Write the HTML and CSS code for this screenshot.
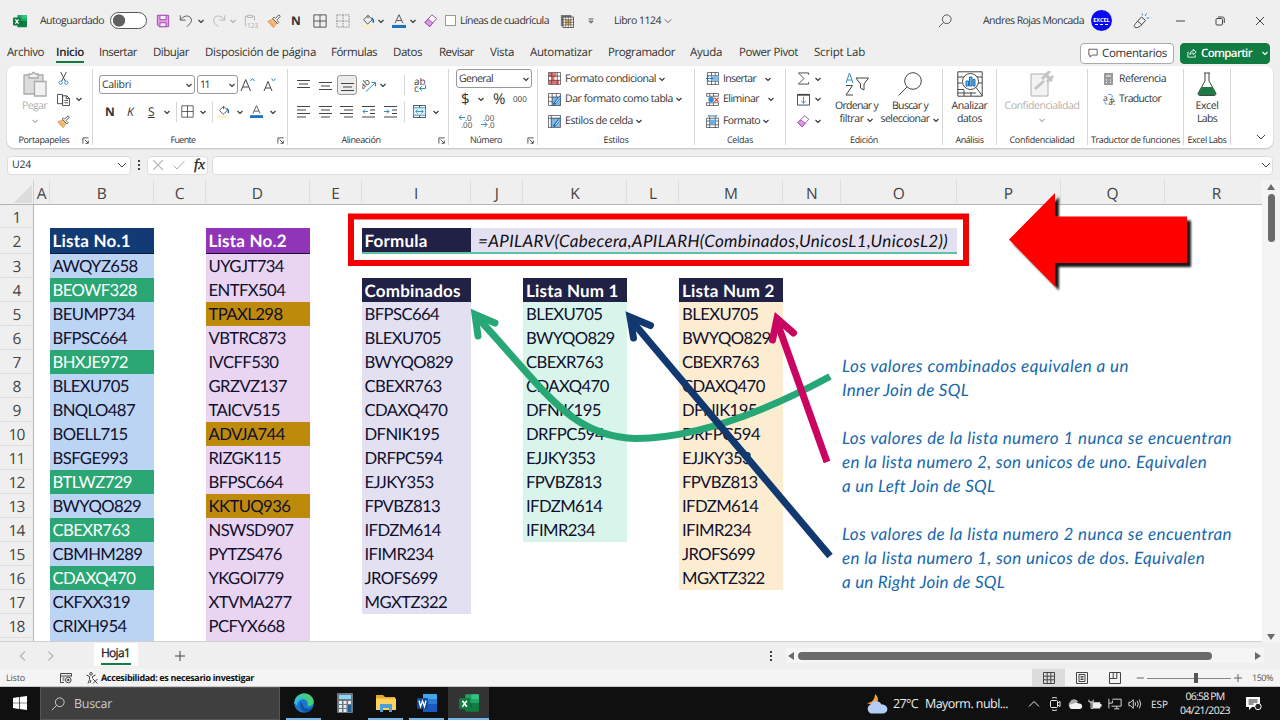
FILE: index.html
```html
<!DOCTYPE html>
<html lang="es">
<head>
    <meta charset="UTF-8">
    <meta name="viewport" content="width=device-width, initial-scale=1.0">
    <title>Libro 1124 - Excel</title>
    <link rel="stylesheet" href="styles.css">
</head>
<body>

    <!-- Icon sprite -->
    <svg class="sprite">
        <symbol id="chev" viewBox="0 0 8 8"><path d="M1.500 3 L4 5.500 L6.500 3"/></symbol>
        <symbol id="chev-lg" viewBox="0 0 10 10"><path d="M1 3 L5 7 L9 3"/></symbol>
        <symbol id="caret-up" viewBox="0 0 12 12"><path d="M1 8.500 L6 3.500 L11 8.500"/></symbol>
        <symbol id="excel" viewBox="0 0 16 16"><path class="nos" fill="#21a366" d="M5 1h10a1 1 0 0 1 1 1v6H5z"/><path class="nos" fill="#107c41" d="M5 8h11v6a1 1 0 0 1-1 1H5z"/><path class="nos" fill="#33c481" d="M10 1h5a1 1 0 0 1 1 1v3h-6z"/><path class="nos" fill="#185c37" d="M5 8h5v4H5z"/><rect class="nos" fill="#107c41" y="4" width="9" height="9" rx="1"/><path stroke="#fff" stroke-width="1.3" d="M2.7 6.2l3.6 4.8M6.3 6.2L2.7 11"/></symbol>
        <symbol id="save" viewBox="0 0 16 16"><path fill="#e29be8" stroke="#9c3fae" d="M1.5 1.5h13v13h-11l-2-2z"/><path fill="#f6eef8" stroke="#9c3fae" d="M4.5 1.5h7v5h-7zM4.500 14.500v-4.500h7v4.500z"/></symbol>
        <symbol id="undo" viewBox="0 0 16 16"><path d="M1.500 1.500v5.500h6M2 6.500C5 2.500 9 1 12.500 3.500c3 3 1.500 6-.5 8L9 14.500"/></symbol>
        <symbol id="redo" viewBox="0 0 16 16"><path d="M14.500 1.500v5.500h-6M14 6.500C11 2.500 7 1 3.500 3.500c-3 3-1.500 6 .5 8L7 14.500"/></symbol>
        <symbol id="paste123" viewBox="0 0 16 16"><path d="M2.500 13.500H1.500v-11H4M9.500 2.500h2.500v5M4 1.500h5.500v2.500H4z"/><text class="faint" x="3.500" y="15.500" font-size="7.500">123</text></symbol>
        <symbol id="brush" viewBox="0 0 16 16"><path fill="#f9c48b" stroke="#d9822b" d="M1 8.500l6-2.500 4 4.500-3.500 5z"/><path stroke="#d9822b" d="M4 11l2-2M5.500 13l2.500-2.500"/><path fill="#fff" d="M6.500 5l5.500 6 1.500-1.500-2.300-2.500 4-4.500-1.500-1.500-4.300 4-1.500-1.500z"/></symbol>
        <symbol id="borders" viewBox="0 0 16 16"><path d="M1 1h14v14H1zM8 1v14M1 8h14"/></symbol>
        <symbol id="dashes" viewBox="0 0 16 16"><path stroke-dasharray="2 1" d="M1 1h14v14H1zM8 1v14M1 8h14"/></symbol>
        <symbol id="fill" viewBox="0 0 16 16"><path d="M3 6.500l5-5 5 5-5.500 5zM8 1.500V5"/><path stroke="#1b6fb5" stroke-width="1.800" d="M12 4.500c2 1 2.500 2.500 2 5.500"/><path class="nos" fill="#fbeecb" d="M0 13h14v3H0z"/></symbol>
        <symbol id="fontcolor" viewBox="0 0 16 16"><path d="M3.500 10.500L8 .8l4.500 9.700M5 7.500h6"/><path class="nos" fill="#1b72bd" d="M0 12.500h16v3.500H0z"/></symbol>
        <symbol id="eraser" viewBox="0 0 16 16"><path fill="#fff" stroke="#9c3fae" d="M1 9.500l8-8.500 5.500 4-8 9.500z"/><path fill="#d99be2" stroke="#9c3fae" d="M1 9.500l3.500-3.500 5.500 4-3.500 4.500z"/></symbol>
        <symbol id="tablepic" viewBox="0 0 16 16"><path class="nos" fill="#777" d="M1 1h12v3H4v10H1z"/><path fill="#fff" d="M3.500 3.500h12v12h-12z"/><path class="nos" fill="#f3b050" d="M6.500 6.500h6v6h-6z"/><path stroke-width=".7" d="M6.500 3.500v12M9.500 3.500v12M12.500 3.500v12M3.500 6.500h12M3.500 9.500h12M3.500 12.500h12"/></symbol>
        <symbol id="qat" viewBox="0 0 8 8"><path stroke-width=".8" d="M1.500 2h5M2 4.200l2 2L6 4.200z"/></symbol>
        <symbol id="search" viewBox="0 0 16 16"><circle cx="10" cy="6" r="5"/><path d="M6.500 9.500L1 15"/></symbol>
        <symbol id="pen" viewBox="0 0 16 16"><path d="M2 14.500c-1.500-1-.5-2.500.5-4L8.500 4l4 3.500L7 13.500c-2 1-3.500 1.500-5 1zM5 8.500l4 3.500"/><path stroke="#2f8fc5" d="M9.500 2.500L9 .5M12 3l1.500-2.500M13.500 5h2.500"/></symbol>
        <symbol id="min" viewBox="0 0 10 10"><path d="M1 5h9"/></symbol>
        <symbol id="restore" viewBox="0 0 10 10"><path d="M1 3.500q0-1 1-1h4.500q1 0 1 1V8q0 1-1 1H2q-1 0-1-1zM3 1h4.500q1.800 0 1.800 1.800V7"/></symbol>
        <symbol id="close" viewBox="0 0 10 10"><path d="M1 1l8 8M9 1L1 9"/></symbol>
        <symbol id="comment" viewBox="0 0 12 12"><path d="M1 1.500h10v7H5l-2.500 2.500V8.500H1z"/></symbol>
        <symbol id="share" viewBox="0 0 12 12"><path d="M2 5H1v6h9V8.500M3.500 8c0-3 1.500-4.500 4-4.500V1.500l3.500 3.500-3.500 3V6C5.500 6 4.500 6.500 3.500 8z"/></symbol>
        <symbol id="paste" viewBox="0 0 24 26"><path fill="#dcdcdc" stroke="#aaa" stroke-width="1.300" d="M1 4h19v19H1z"/><path fill="#f1f1f1" stroke="#aaa" stroke-width="1.300" d="M6 3h3q1.500-3.500 3 0h3v4H6zM11.500 10.500H23V25H11.500z"/></symbol>
        <symbol id="cut" viewBox="0 0 14 14"><path d="M4 0l5 10M10 0L5 10"/><circle cx="4" cy="11.500" r="1.800" stroke="#2f8fc5"/><circle cx="10" cy="11.500" r="1.800" stroke="#2f8fc5"/></symbol>
        <symbol id="copy" viewBox="0 0 14 14"><path fill="#fff" d="M6 11.500H.5V1.500H6v10M6 3h4.500l3 3v7.500H6zM10 3v3h3.500M8 8h4M8 10.500h4"/></symbol>
        <symbol id="launch" viewBox="0 0 8 8"><path d="M1 7.500V1h6.500M3 3l4 4M7.200 4v3.200H4"/></symbol>
        <symbol id="grow" viewBox="0 0 16 16"><path d="M1 14L5.700 2.500 10.500 14M2.700 10h6"/><path stroke="#2f8fc5" d="M10.500 4l2-2.500 2 2.500"/></symbol>
        <symbol id="shrink" viewBox="0 0 16 16"><path d="M1 14L5 4.500 9 14M2.300 11h5.500"/><path stroke="#2f8fc5" d="M8.500 1.500l2 2.500 2-2.500"/></symbol>
        <symbol id="al-top" viewBox="0 0 14 14"><path d="M0 2.500h13M2 6h9M0 9.500h13"/></symbol>
        <symbol id="al-mid" viewBox="0 0 14 14"><path d="M0 4.500h13M2 8h9M0 11.500h13"/></symbol>
        <symbol id="al-bot" viewBox="0 0 14 14"><path d="M0 5.500h13M2 9h9M0 12.500h13"/></symbol>
        <symbol id="al-left" viewBox="0 0 14 14"><path d="M0 1.500h13M0 5h9M0 8.500h13M0 12h9"/></symbol>
        <symbol id="al-center" viewBox="0 0 14 14"><path d="M0 1.500h13M2 5h9M0 8.500h13M2 12h9"/></symbol>
        <symbol id="al-right" viewBox="0 0 14 14"><path d="M0 1.500h13M4 5h9M0 8.500h13M4 12h9"/></symbol>
        <symbol id="outdent" viewBox="0 0 14 14"><path d="M0 1.500h13M8 5h5M8 8.500h5M0 12h13"/><path stroke="#2f8fc5" d="M6 6.500H1M3 4.500l-2 2 2 2"/></symbol>
        <symbol id="indent" viewBox="0 0 14 14"><path d="M0 1.500h13M8 5h5M8 8.500h5M0 12h13"/><path stroke="#2f8fc5" d="M0 6.500h5M3 4.500l2 2-2 2"/></symbol>
        <symbol id="orient" viewBox="0 0 14 14"><text x="-2" y="8" font-size="9" transform="rotate(-40 4 6)">ab</text><path stroke="#2f8fc5" d="M4 13.500L13 5M9.500 4.500H13.500V8.500"/></symbol>
        <symbol id="wrap" viewBox="0 0 14 14"><text x="1" y="7" font-size="10">ab</text><text x="1" y="14" font-size="10">c</text><path stroke="#2f8fc5" d="M12.500 7v3.500H6.500M9 8l-2.500 2.500L9 13"/></symbol>
        <symbol id="merge" viewBox="0 0 14 14"><path d="M.5.5h13v13H.5zM7 .5V3M7 11v2.500"/><path fill="#e3f1fb" stroke="#2f8fc5" d="M.5 3h13v8H.5zM3 7h8M5 5L3 7l2 2M9 5l2 2-2 2"/></symbol>
        <symbol id="dec-more" viewBox="0 0 14 14"><text x="6" y="6.500" font-size="8">.0</text><text x="2" y="14" font-size="8">.00</text><path stroke="#2f8fc5" d="M6 3.500H0M2.500 1L0 3.500 2.500 6"/></symbol>
        <symbol id="dec-less" viewBox="0 0 14 14"><text x="2" y="6.500" font-size="8">.00</text><text x="7" y="14" font-size="8">.0</text><path stroke="#2f8fc5" d="M0 10.500h6M3.500 8L6 10.500 3.500 13"/></symbol>
        <symbol id="condfmt" viewBox="0 0 14 14"><path class="nos" fill="#ee6f6f" d="M1 1h8v4H1zM1 9h11v4H1zM4 5h3v4H4z"/><path stroke-width=".8" d="M.5.5h13v13H.500zM4 .5v13M10 .5v13M.500 4.500h13M.500 9h13"/></symbol>
        <symbol id="tablefmt" viewBox="0 0 14 14"><path class="nos" fill="#7fb8e6" d="M4 4h10v10H4z"/><path stroke-width=".8" d="M.5.5h13v13H.500zM4.500 .5v13M9 .5v4M.500 4.500h13M.500 9h4"/><path stroke="#1b6fb5" stroke-width="2.500" d="M14 3L6 12.500"/><path stroke="#fff" d="M13 4.500l-5 6"/></symbol>
        <symbol id="cellstyle" viewBox="0 0 14 14"><path class="nos" fill="#7fb8e6" d="M3 3h10v10H3z"/><path stroke-width=".8" d="M.5.5h13v13H.500zM3.500 .5v13M.500 3.500h13"/><path stroke="#1b6fb5" stroke-width="2.500" d="M14 3L6 12.500"/><path stroke="#fff" d="M13 4.500l-5 6"/></symbol>
        <symbol id="cellins" viewBox="0 0 14 14"><path stroke-width=".8" d="M1.500 .5h12v13h-12zM6 .5v13M1.500 4h12M1.500 10h12M10 .5v13"/><path class="nos" fill="#7fc0ee" d="M6 4h7.500v6H6z"/><path stroke="#1b72bd" d="M8 7H0M3 4.500L.5 7 3 9.500"/></symbol>
        <symbol id="celldel" viewBox="0 0 14 14"><path stroke-width=".8" d="M.5.5h13M.5 13.500h13M.5 3.500H13.500M.5 10.500h13M.5 .5v3M4 .5v3M8 .5v3M13.500 .5v3M4 10.500v3M8 10.500v3M.5 10.500v3M13.500 10.500v3"/><circle class="nos" fill="#2f8fd5" cx="5.500" cy="7" r="3"/><path stroke="#e03c3c" stroke-width="1.300" d="M9 5l4.500 4.500M13.500 5L9 9.500"/></symbol>
        <symbol id="cellfmt" viewBox="0 0 14 14"><path stroke-width=".8" d="M.5 3.500h13v10H.5zM4 2v12M10 2v12M.5 10.500h13M.5 6.500h13"/><path class="nos" fill="#64b0ea" d="M4 5h6v5H4z"/><path stroke="#1b72bd" d="M3 1h8M3 0v2M11 0v2"/></symbol>
        <symbol id="sigma" viewBox="0 0 14 14"><path d="M12.500 3V1H1.500l6 6-6 6h11v-2"/></symbol>
        <symbol id="filldown" viewBox="0 0 14 14"><path d="M.5 1.500h13v11.500H.5z"/><path stroke-width="1.800" d="M.5 2h13"/><path stroke="#2f8fc5" d="M7 4v7M4.500 8.500L7 11l2.500-2.500"/></symbol>
        <symbol id="sort" viewBox="0 0 24 24"><path stroke="#2f8fc5" d="M1 11L4.500 1 8 11M2 8h5"/><path d="M1 13.500h6.500L1 23h7M11 6h12.500L19 12v6l-3.500-2v-4z"/></symbol>
        <symbol id="lens" viewBox="0 0 24 24"><circle cx="15" cy="9" r="8.300"/><path d="M9 15l-8.500 8.500"/></symbol>
        <symbol id="analyze" viewBox="0 0 26 26"><path d="M.8.8h24.400v24.400H.8zM.8 6h6M20 6h5M.8 12h4M.8 18.500h6M21 12h4M7 19v6M14 21v4M.8 22h18"/><circle cx="13.500" cy="10.500" r="8" fill="#fff"/><path d="M19 16.500l6.500 8.500"/><path fill="#6db6ec" stroke="#1b6fb5" d="M9 10h2.500v5H9zM12.500 6H15v9h-2.500zM16 8.500h2v6.500h-2z"/></symbol>
        <symbol id="sens" viewBox="0 0 26 26"><path fill="#f3f3f3" d="M2 3h17v22H2z"/><path stroke-width="3" stroke="#c4c4c4" d="M6 18l9-8M16 3l7 7M13 8l8-8M18 11l6-6"/></symbol>
        <symbol id="calcbook" viewBox="0 0 10 12"><path class="nos" fill="#9a9a9a" d="M0 0h9v12H0z"/><path stroke="#fff" d="M2 3h5M2 7h1M6 7h1M2 9.500h1M6 9.500h1"/></symbol>
        <symbol id="translate" viewBox="0 0 14 14"><text x="0" y="9" font-size="10">a</text><text x="6" y="13" font-size="10">あ</text><path stroke="#2f8fc5" d="M6 2c3-1 5 0 5 3M2 10c0 2 1 3 3 3"/></symbol>
        <symbol id="flask" viewBox="0 0 20 24"><path d="M7 1h6M8 1v8L1 21.500q0 2 2 2h14q2 0 2-2L12 9V1"/><path class="nos" fill="#1c7a45" d="M4.500 15h11l3.500 6.500q0 1.500-2 1.500H3q-2 0-2-1.500z"/></symbol>
        <symbol id="check" viewBox="0 0 12 10"><path d="M.5 5.500L4 9l7.500-8"/></symbol>
        <symbol id="left" viewBox="0 0 8 8"><path d="M5.500 .5L2 4l3.500 3.500"/></symbol>
        <symbol id="right" viewBox="0 0 8 8"><path d="M2 .5L5.500 4 2 7.500"/></symbol>
        <symbol id="plus" viewBox="0 0 10 10"><path d="M5 0v10M0 5h10"/></symbol>
        <symbol id="macro" viewBox="0 0 12 12"><path d="M4 10.500H.5v-9h11v3M.5 4h11M2.500 6h2M2.500 8h2"/><circle cx="8.300" cy="8" r="2.800"/><circle class="nos" fill="#444" cx="8.300" cy="8" r="1.200"/></symbol>
        <symbol id="access" viewBox="0 0 12 12"><circle cx="5" cy="1.800" r="1.300"/><path d="M.5 3l3 1.500v3L2 11.500M9.500 3l-3 1.500v2M5 8l-1 3M7 7l4.500 4.500M11.500 7L7 11.500"/></symbol>
        <symbol id="v-normal" viewBox="0 0 12 12"><path d="M.5.5h11v11H.5zM4.200.5v11M7.800.5v11M.5 4.200h11M.5 7.800h11"/></symbol>
        <symbol id="v-page" viewBox="0 0 12 12"><path d="M.5.5h11v11H.5zM3 2.500h6v7H3zM4.500 4.500h3M4.500 6h3M4.500 7.500h3"/></symbol>
        <symbol id="v-break" viewBox="0 0 12 12"><path d="M.5.5h11v11H.5zM4.200.5v6M7.800.5v6M.5 6.500h7.300"/></symbol>
        <symbol id="windows" viewBox="0 0 16 16"><path class="nos" fill="#fff" d="M1 3l6-1v5.700H1zM7.700 1.900L15 1v6.700H7.700zM1 8.300h6V14l-6-1zM7.700 8.300H15V15l-7.300-1z"/></symbol>
        <symbol id="edge" viewBox="0 0 20 20"><circle class="nos" cx="10" cy="10" r="9.800" fill="#1b78d0"/><path class="nos" fill="#45cf7d" d="M1 7C4-1 16-2 19.500 7c1 4-2 6.500-6 6 1.500-5-3-8-7-6.500C3.500 7.500 1 10 .3 11z"/><path class="nos" fill="#35b7e6" d="M.3 10C1 4 9 2 13 7 8 5 3 8 3 13z"/><path class="nos" fill="#12559f" d="M7 8.500c-3 6 1 11 7 10.500 3-1 4-3 4.500-4.500-3 2-8 1.500-9.500-2z"/></symbol>
        <symbol id="calc" viewBox="0 0 16 20"><rect class="nos" width="16" height="20" rx="1" fill="#6d7881"/><path class="nos" fill="#8fd5f4" d="M2 2h12v4H2z"/><path class="nos" fill="#e7eaec" d="M2 8h3v3H2zM6.500 8h3v3h-3zM11 8h3v3h-3zM2 12h3v3H2zM6.500 12h3v3h-3zM2 16h3v3H2zM6.500 16h3v3h-3z"/><path class="nos" fill="#1b5f9e" d="M11 12h3v7h-3z"/></symbol>
        <symbol id="folder" viewBox="0 0 20 18"><path class="nos" fill="#e6a82d" d="M0 1h7l2 2h10v5H0z"/><path class="nos" fill="#fbd35e" d="M0 4.500h20V16H0z"/><path class="nos" fill="#4a9fd8" d="M4 10h12v8h-3v-4H7v4H4z"/></symbol>
        <symbol id="word" viewBox="0 0 20 20"><path class="nos" fill="#41a5ee" d="M6 1h13q1 0 1 1v4H6z"/><path class="nos" fill="#2b7cd3" d="M6 6h14v5H6z"/><path class="nos" fill="#185abd" d="M6 11h14v7q0 1-1 1H6z"/><rect class="nos" fill="#134a9e" y="5" width="11" height="11" rx="1"/><path stroke="#fff" stroke-width="1.300" d="M2 7.500l1.500 6 2-5.500 2 5.500L9 7.500"/></symbol>
        <symbol id="weather" viewBox="0 0 22 20"><path class="nos" fill="#f2a43a" d="M9 0c5 4 3 10-1 12L1 9C6 9 9 5 9 0z"/><path class="nos" fill="#b3cdf7" d="M5 19.500a4.800 4.800 0 0 1-.3-9C6 6 14 6 15.500 10.500c7-.5 8 8.500 1.500 9z"/></symbol>
        <symbol id="meet" viewBox="0 0 12 14"><rect x="1.500" y="3.500" width="7" height="7" rx="1"/><path d="M8.500 6l2.500-1.500v5L8.500 8M3 1q2.500-1 5 0M3 13q2.500 1 5 0"/></symbol>
        <symbol id="cloud" viewBox="0 0 16 10"><path class="nos" fill="#aaa" d="M3 8a3 3 0 0 1 0-5c2-4 7-3 8 0z"/><path class="nos" fill="#f2f2f2" d="M4 10a2.600 2.600 0 0 1 1-5c3-1 4-2 7-.5A2.800 2.800 0 0 1 13 10z"/></symbol>
        <symbol id="battery" viewBox="0 0 16 12"><path class="nos" fill="#eee" d="M5 4h9v7H5zM14 6h1.500v3H14z"/><path d="M3.500 4V11h2M1 1v2.500h5V1M3.500 3.500v2"/></symbol>
        <symbol id="screen" viewBox="0 0 16 14"><path d="M5 1.500h10v8H4M10 9.500v3M7 12.500h6M1 1v5h4V3M1 6v6"/></symbol>
        <symbol id="sound" viewBox="0 0 16 12"><path d="M1 4h2l3-3v10L3 8H1zM8 4q1.500 2 0 4M10.500 2.500q2.500 3.500 0 7M13 1q3 5 0 10"/></symbol>
        <symbol id="notif" viewBox="0 0 16 14"><path class="nos" fill="#fff" d="M0 0h14v10H6l-3 3v-3H0z"/><path stroke="#222" d="M2.500 3h9M2.500 5h9M2.500 7h5"/><circle cx="12" cy="9.500" r="3.200" fill="#222" stroke="#fff"/></symbol>
    </svg>

    <!-- Title bar -->
    <header class="titlebar">
        <svg class="i14"><use href="#excel"/></svg>
        <span data-w="64">Autoguardado</span>
        <span class="toggle"></span>
        <svg class="i14"><use href="#save"/></svg>
        <svg class="i14"><use href="#undo"/></svg>
        <svg class="ch"><use href="#chev"/></svg>
        <svg class="i14 dim"><use href="#redo"/></svg>
        <svg class="ch dim"><use href="#chev"/></svg>
        <svg class="i14 dim"><use href="#paste123"/></svg>
        <svg class="i14"><use href="#brush"/></svg>
        <b class="letter">N</b>
        <svg class="i14"><use href="#borders"/></svg>
        <svg class="i14 dashed"><use href="#dashes"/></svg>
        <svg class="i14"><use href="#fill"/></svg>
        <svg class="ch"><use href="#chev"/></svg>
        <svg class="i14"><use href="#fontcolor"/></svg>
        <svg class="ch"><use href="#chev"/></svg>
        <svg class="i14"><use href="#eraser"/></svg>
        <span class="checkbox"></span>
        <span data-w="89">Líneas de cuadrícula</span>
        <svg class="i14"><use href="#tablepic"/></svg>
        <svg class="ch"><use href="#qat"/></svg>
        <span data-w="47">Libro 1124</span>
        <svg class="i8"><use href="#chev-lg"/></svg>
        <svg class="i14"><use href="#search"/></svg>
        <span data-w="101">Andres Rojas Moncada</span>
        <span class="avatar">EXCEL<i></i></span>
        <svg class="i16"><use href="#pen"/></svg>
        <svg class="i10"><use href="#min"/></svg>
        <svg class="i10"><use href="#restore"/></svg>
        <svg class="i10"><use href="#close"/></svg>
    </header>

    <!-- Ribbon tabs -->
    <nav class="tabs">
        <span data-w="37">Archivo</span>
        <b class="active" data-w="28">Inicio</b>
        <span data-w="38">Insertar</span>
        <span data-w="36">Dibujar</span>
        <span data-w="111">Disposición de página</span>
        <span data-w="46">Fórmulas</span>
        <span data-w="29">Datos</span>
        <span data-w="35">Revisar</span>
        <span data-w="24">Vista</span>
        <span data-w="62">Automatizar</span>
        <span data-w="67">Programador</span>
        <span data-w="32">Ayuda</span>
        <span data-w="59">Power Pivot</span>
        <span data-w="51">Script Lab</span>
        <span class="btn"><svg class="i10"><use href="#comment"/></svg><span data-w="65">Comentarios</span></span>
        <span class="btn green"><svg class="i10"><use href="#share"/></svg><b data-w="51">Compartir</b><svg class="ch"><use href="#chev"/></svg></span>
    </nav>

    <!-- Ribbon -->
    <section class="ribbon">
        <div class="group g-clip">
            <div class="body clip">
                <div class="big dim">
                    <svg class="i26"><use href="#paste"/></svg>
                    <span data-w="25">Pegar</span>
                    <svg class="ch"><use href="#chev"/></svg>
                </div>
                <div class="rows3">
                    <div class="line"><svg class="i13"><use href="#cut"/></svg></div>
                    <div class="line"><svg class="i13"><use href="#copy"/></svg><svg class="ch"><use href="#chev"/></svg></div>
                    <div class="line"><svg class="i13"><use href="#brush"/></svg></div>
                </div>
            </div>
            <div class="label"><span data-w="51">Portapapeles</span><svg class="launch"><use href="#launch"/></svg></div>
        </div>
        <div class="group g-font">
            <div class="body rows2">
                <div class="font1">
                    <span class="box"><span data-w="29">Calibri</span><svg class="ch"><use href="#chev"/></svg></span>
                    <span class="box"><span data-w="9">11</span><svg class="ch"><use href="#chev"/></svg></span>
                    <svg class="i16"><use href="#grow"/></svg>
                    <svg class="i16"><use href="#shrink"/></svg>
                </div>
                <div class="font2">
                    <b class="letter">N</b><i class="letter">K</i><u class="letter">S</u>
                    <svg class="ch"><use href="#chev"/></svg>
                    <span class="sep"></span>
                    <svg class="i13"><use href="#borders"/></svg>
                    <svg class="ch"><use href="#chev"/></svg>
                    <span class="sep"></span>
                    <svg class="i13"><use href="#fill"/></svg>
                    <svg class="ch"><use href="#chev"/></svg>
                    <svg class="i13"><use href="#fontcolor"/></svg>
                    <svg class="ch"><use href="#chev"/></svg>
                </div>
            </div>
            <div class="label"><span data-w="25">Fuente</span><svg class="launch"><use href="#launch"/></svg></div>
        </div>
        <div class="group g-align">
            <div class="body rows2">
                <div class="align">
                    <svg class="i14"><use href="#al-top"/></svg>
                    <svg class="i14"><use href="#al-mid"/></svg>
                    <span class="pressed"><svg class="i14"><use href="#al-bot"/></svg></span>
                    <svg class="i14"><use href="#orient"/></svg>
                    <svg class="ch"><use href="#chev"/></svg>
                    <span class="sep"></span>
                    <svg class="i14"><use href="#wrap"/></svg>
                </div>
                <div class="align">
                    <svg class="i14"><use href="#al-left"/></svg>
                    <svg class="i14"><use href="#al-center"/></svg>
                    <svg class="i14"><use href="#al-right"/></svg>
                    <svg class="i14"><use href="#outdent"/></svg>
                    <svg class="i14"><use href="#indent"/></svg>
                    <span class="sep"></span>
                    <svg class="i13"><use href="#merge"/></svg>
                    <svg class="ch"><use href="#chev"/></svg>
                </div>
            </div>
            <div class="label"><span data-w="39">Alineación</span><svg class="launch"><use href="#launch"/></svg></div>
        </div>
        <div class="group g-num">
            <div class="body rows3">
                <div class="num1"><span class="box"><span data-w="34">General</span><svg class="ch"><use href="#chev"/></svg></span></div>
                <div class="num2">
                    <span class="sym">$</span><svg class="ch"><use href="#chev"/></svg><span class="sym">%</span><span class="zeros">000</span>
                </div>
                <div class="num3"><svg class="i14"><use href="#dec-more"/></svg><svg class="i14"><use href="#dec-less"/></svg></div>
            </div>
            <div class="label"><span data-w="32">Número</span><svg class="launch"><use href="#launch"/></svg></div>
        </div>
        <div class="group g-style">
            <div class="body rows3">
                <div class="line"><svg class="i13"><use href="#condfmt"/></svg><span data-w="91">Formato condicional</span><svg class="ch"><use href="#chev"/></svg></div>
                <div class="line"><svg class="i13"><use href="#tablefmt"/></svg><span data-w="108">Dar formato como tabla</span><svg class="ch"><use href="#chev"/></svg></div>
                <div class="line"><svg class="i13"><use href="#cellstyle"/></svg><span data-w="68">Estilos de celda</span><svg class="ch"><use href="#chev"/></svg></div>
            </div>
            <div class="label"><span data-w="25">Estilos</span></div>
        </div>
        <div class="group g-cells">
            <div class="body rows3">
                <div class="line"><svg class="i13"><use href="#cellins"/></svg><span data-w="33">Insertar</span><svg class="ch far"><use href="#chev"/></svg></div>
                <div class="line"><svg class="i13"><use href="#celldel"/></svg><span data-w="36">Eliminar</span><svg class="ch far"><use href="#chev"/></svg></div>
                <div class="line"><svg class="i13"><use href="#cellfmt"/></svg><span data-w="37">Formato</span><svg class="ch"><use href="#chev"/></svg></div>
            </div>
            <div class="label"><span data-w="26">Celdas</span></div>
        </div>
        <div class="group g-edit">
            <div class="body edit">
                <div class="rows3">
                    <div class="line"><svg class="i13"><use href="#sigma"/></svg><svg class="ch"><use href="#chev"/></svg></div>
                    <div class="line"><svg class="i13"><use href="#filldown"/></svg><svg class="ch"><use href="#chev"/></svg></div>
                    <div class="line"><svg class="i13"><use href="#eraser"/></svg><svg class="ch"><use href="#chev"/></svg></div>
                </div>
                <div class="big">
                    <svg class="i24"><use href="#sort"/></svg>
                    <span data-w="43">Ordenar y</span>
                    <div class="last"><span data-w="24">filtrar</span><svg class="ch"><use href="#chev"/></svg></div>
                </div>
                <div class="big">
                    <svg class="i24"><use href="#lens"/></svg>
                    <span data-w="36">Buscar y</span>
                    <div class="last"><span data-w="49">seleccionar</span><svg class="ch"><use href="#chev"/></svg></div>
                </div>
            </div>
            <div class="label"><span data-w="28">Edición</span></div>
        </div>
        <div class="group g-ana">
            <div class="body big">
                <svg class="i26"><use href="#analyze"/></svg>
                <span data-w="36">Analizar</span>
                <div class="last"><span data-w="25">datos</span></div>
            </div>
            <div class="label"><span data-w="28">Análisis</span></div>
        </div>
        <div class="group g-conf">
            <div class="body big dim">
                <svg class="i26"><use href="#sens"/></svg>
                <span data-w="75">Confidencialidad</span>
                <div class="last"><svg class="ch"><use href="#chev"/></svg></div>
            </div>
            <div class="label"><span data-w="65">Confidencialidad</span></div>
        </div>
        <div class="group g-trad">
            <div class="body rows3">
                <div class="line"><svg class="i12"><use href="#calcbook"/></svg><span data-w="47">Referencia</span></div>
                <div class="line"><svg class="i12"><use href="#translate"/></svg><span data-w="42">Traductor</span></div>
            </div>
            <div class="label"><span data-w="89">Traductor de funciones</span></div>
        </div>
        <div class="group g-labs">
            <div class="body big">
                <svg class="i24"><use href="#flask"/></svg>
                <span data-w="23">Excel</span>
                <div class="last"><span data-w="20">Labs</span></div>
            </div>
            <div class="label"><span data-w="39">Excel Labs</span></div>
        </div>
        <svg class="i10 collapse"><use href="#chev-lg"/></svg>
    </section>

    <!-- Formula bar -->
    <section class="formulabar">
        <div class="namebox"><span data-w="19">U24</span><svg class="i10"><use href="#chev-lg"/></svg></div>
        <span class="dots"></span>
        <div class="fxbox">
            <svg class="i12 dim"><use href="#close"/></svg>
            <svg class="i12 dim"><use href="#check"/></svg>
            <i class="fx">fx</i>
        </div>
        <div class="input"></div>
        <svg class="i10"><use href="#chev-lg"/></svg>
    </section>

    <!-- Worksheet -->
    <main class="work">
        <div class="sheet">
            <div class="cells" id="cells"></div>

            <!-- Shapes drawn over the cells -->
            <svg class="shapes" viewBox="0 0 1262 462">
                <defs>
                    <filter id="shadow" x="-10%" y="-10%" width="120%" height="130%">
                        <feDropShadow dx="4" dy="4" stdDeviation="0.8" flood-color="#000" flood-opacity="0.9"/>
                    </filter>
                </defs>
                <rect x="351" y="36.500" width="615" height="46.500" fill="none" stroke="#f50000" stroke-width="6"/>
                <path d="M1009 59.500L1055 13v23.500h132V83h-132v23.500z" fill="#f00" stroke="none" filter="url(#shadow)"/>
                <g fill="none" stroke-width="7">
                    <g stroke="#27a776">
                        <path d="M830 196.500C757 236 690 258 636 258.500C570 257 545 210 476 136"/>
                        <path stroke-linecap="round" d="M478 156L475 134.500L495 143"/>
                    </g>
                    <g stroke="#11386f">
                        <path d="M830 376L631 140"/>
                        <path stroke-linecap="round" d="M633.500 158L630 137L650.500 145.500"/>
                    </g>
                    <g stroke="#c90461">
                        <path d="M827 282L777 142"/>
                        <path stroke-linecap="round" d="M772.500 160L777 138.500L793.500 153"/>
                    </g>
                </g>
            </svg>
        </div>
        <div class="vscroll"><i class="up"></i><i class="thumb"></i><i class="down"></i></div>
    </main>

    <!-- Sheet tabs -->
    <section class="sheettabs">
        <svg class="i10 dim"><use href="#left"/></svg>
        <svg class="i10 dim"><use href="#right"/></svg>
        <span class="tab"><span data-w="29">Hoja1</span></span>
        <svg class="i10"><use href="#plus"/></svg>
        <span class="dots"></span>
        <div class="hscroll"><i class="prev"></i><i class="thumb"></i><i class="next"></i></div>
    </section>

    <!-- Status bar -->
    <footer class="status">
        <span class="soft" data-w="19">Listo</span>
        <svg class="i12"><use href="#macro"/></svg>
        <svg class="i12"><use href="#access"/></svg>
        <b data-w="153">Accesibilidad: es necesario investigar</b>
        <span class="view"><svg class="i12"><use href="#v-normal"/></svg></span>
        <svg class="i12"><use href="#v-page"/></svg>
        <svg class="i12"><use href="#v-break"/></svg>
        <svg class="i8"><use href="#min"/></svg>
        <span class="zoom"><i></i></span>
        <svg class="i8"><use href="#plus"/></svg>
        <span class="soft" data-w="21">150%</span>
    </footer>

    <!-- Windows taskbar -->
    <section class="taskbar">
        <span class="app start"><svg class="i16"><use href="#windows"/></svg></span>
        <span class="find"><svg class="i14"><use href="#search"/></svg><span data-w="38">Buscar</span></span>
        <span class="app open"><svg class="i20"><use href="#edge"/></svg></span>
        <span class="app"><svg class="i20"><use href="#calc"/></svg></span>
        <span class="app open"><svg class="i20"><use href="#folder"/></svg></span>
        <span class="app open"><svg class="i20"><use href="#word"/></svg></span>
        <span class="app open current"><svg class="i20"><use href="#excel"/></svg></span>
        <div class="tray">
            <svg class="i22"><use href="#weather"/></svg>
            <span data-w="25">27°C</span>
            <span data-w="83">Mayorm. nubl...</span>
            <svg class="i12"><use href="#caret-up"/></svg>
            <svg class="i14"><use href="#meet"/></svg>
            <svg class="i16"><use href="#cloud"/></svg>
            <svg class="i14"><use href="#battery"/></svg>
            <svg class="i14"><use href="#screen"/></svg>
            <svg class="i14"><use href="#sound"/></svg>
            <span class="small" data-w="17">ESP</span>
            <div class="clock"><span data-w="39">06:58 PM</span><span data-w="50">04/21/2023</span></div>
            <svg class="i16"><use href="#notif"/></svg>
        </div>
    </section>

    <script src="script.js"></script>
</body>
</html>
```
FILE: script.js
```js
const columns = ['A', 'B', 'C', 'D', 'E', 'I', 'J', 'K', 'L', 'M', 'N', 'O', 'P', 'Q', 'R'];

// Column data: first row number, then the values going down
const data = {
    B: [2, 'Lista No.1', 'AWQYZ658', 'BEOWF328', 'BEUMP734', 'BFPSC664', 'BHXJE972', 'BLEXU705', 'BNQLO487', 'BOELL715', 'BSFGE993', 'BTLWZ729', 'BWYQO829', 'CBEXR763', 'CBMHM289', 'CDAXQ470', 'CKFXX319', 'CRIXH954', ''],
    D: [2, 'Lista No.2', 'UYGJT734', 'ENTFX504', 'TPAXL298', 'VBTRC873', 'IVCFF530', 'GRZVZ137', 'TAICV515', 'ADVJA744', 'RIZGK115', 'BFPSC664', 'KKTUQ936', 'NSWSD907', 'PYTZS476', 'YKGOI779', 'XTVMA277', 'PCFYX668', ''],
    I: [4, 'Combinados', 'BFPSC664', 'BLEXU705', 'BWYQO829', 'CBEXR763', 'CDAXQ470', 'DFNIK195', 'DRFPC594', 'EJJKY353', 'FPVBZ813', 'IFDZM614', 'IFIMR234', 'JROFS699', 'MGXTZ322'],
    K: [4, 'Lista Num 1', 'BLEXU705', 'BWYQO829', 'CBEXR763', 'CDAXQ470', 'DFNIK195', 'DRFPC594', 'EJJKY353', 'FPVBZ813', 'IFDZM614', 'IFIMR234'],
    M: [4, 'Lista Num 2', 'BLEXU705', 'BWYQO829', 'CBEXR763', 'CDAXQ470', 'DFNIK195', 'DRFPC594', 'EJJKY353', 'FPVBZ813', 'IFDZM614', 'IFIMR234', 'JROFS699', 'MGXTZ322']
};

const marked = ['B4', 'B7', 'B12', 'B14', 'B16', 'D5', 'D10', 'D13'];

// Notes overflow to the right of column O: text and its width
const notes = {
    7: ['Los valores combinados equivalen a un', 287],
    8: ['Inner Join de SQL', 127],
    10: ['Los valores de la lista numero 1 nunca se encuentran', 390],
    11: ['en la lista numero 2, son unicos de uno. Equivalen', 365],
    12: ['a un Left Join de SQL', 153],
    14: ['Los valores de la lista numero 2 nunca se encuentran', 390],
    15: ['en la lista numero 1, son unicos de dos. Equivalen', 363],
    16: ['a un Right Join de SQL', 163]
};

function buildCells() {
    let html = '<div class="corner"></div>';
    columns.forEach(c => html += `<div class="colhead">${c}</div>`);
    for (let r = 1; r <= 19; r++) {
        html += `<div class="rowhead">${r < 19 ? r : ''}</div>`;
        columns.forEach(c => {
            const list = data[c];
            let cls = 'cell';
            let text = '';
            if (r === 2 && c === 'I') {
                cls += ' head formula';
                text = 'Formula';
            } else if (r === 2 && c === 'J') {
                cls += ' formula-text';
                text = '<span data-w="470">=APILARV(Cabecera,APILARH(Combinados,UnicosL1,UnicosL2))</span>';
            } else if (r === 2 && 'KLMNO'.includes(c)) {
                return; // covered by the formula cell
            } else if (c === 'O' && notes[r]) {
                cls += ' note';
                text = `<span data-w="${notes[r][1]}">${notes[r][0]}</span>`;
            } else if (list && r >= list[0] && r - list[0] + 1 < list.length) {
                cls += r === list[0] ? ` head head-${c}` : ` val-${c}`;
                if (marked.includes(c + r)) cls += ' marked';
                text = list[r - list[0] + 1];
            }
            html += `<div class="${cls}">${text}</div>`;
        });
    }
    document.getElementById('cells').innerHTML = html;
}

// Adjust letter spacing so that each label takes its set width
function fitLabels() {
    document.querySelectorAll('[data-w]').forEach(el => {
        el.style.letterSpacing = '0px';
        const range = document.createRange();
        range.selectNodeContents(el);
        const diff = el.dataset.w - range.getBoundingClientRect().width;
        el.style.letterSpacing = diff / el.textContent.length + 'px';
    });
}

buildCells();
fitLabels();
```
FILE: styles.css
```css
* {
    box-sizing: border-box;
}

body {
    margin: 0;
    width: 1280px;
    height: 720px;
    overflow: hidden;
    background: #efefef;
    color: #333;
    font-family: "Open Sans", "Noto Sans", sans-serif;
    font-size: 10.5px;
    white-space: nowrap;
    text-rendering: geometricPrecision;
}

/* Icons */
svg {
    fill: none;
    stroke: #444;
    stroke-width: 1;
    display: block;
    flex: none;
    overflow: visible;
}

svg text {
    fill: #444;
    stroke: none;
}

svg .faint { fill: #a8a8a8; }

.sprite { display: none; }

.nos { stroke: none; }
.ch { width: 8px; height: 8px; stroke: #333; stroke-width: 1.1; }
.i8 { width: 8px; height: 8px; }
.i10 { width: 10px; height: 10px; }
.i12 { width: 12px; height: 12px; }
.i13 { width: 13px; height: 13px; }
.i14 { width: 14px; height: 14px; }
.i16 { width: 16px; height: 16px; }
.i20 { width: 20px; height: 20px; }
.i22 { width: 22px; height: 20px; }
.i24 { width: 24px; height: 24px; }
.i26 { width: 26px; height: 26px; }
.dim { color: #b0b0b0; stroke: #b0b0b0; }
.dim svg { stroke: #b0b0b0; }
.dashed { stroke: #888; }
.letter { font-size: 12px; }

/* Title bar */
.titlebar {
    display: grid;
    grid-template-columns: 27px 70px 46px 23px 18px 15px 17px 15px 23px 24px 22px 23px 25px 16px 15px 17px 15px 21px 15px 100px 27px 27px 50px 274px 45px 108px 42px 42px 40px 40px 25px;
    align-items: center;
    height: 41px;
    padding-left: 13px;
}

.toggle {
    width: 37px;
    height: 17px;
    border: 1px solid #555;
    border-radius: 9px;
    background: radial-gradient(circle at 8px 7.5px, #606060 5.8px, #fff 6.4px);
}

.checkbox {
    width: 11px;
    height: 11px;
    border: 1px solid #999;
    background: #fff;
}

.avatar {
    width: 21px;
    height: 21px;
    border-radius: 50%;
    background: #0a0af0;
    color: #fff;
    font-size: 5.5px;
    font-weight: bold;
    text-align: center;
    line-height: 8px;
    padding-top: 6px;
}

.avatar i {
    display: block;
    height: 2px;
    margin: 0 4px;
    border-top: 1px dashed #fff;
}

/* Ribbon tabs */
.tabs {
    display: grid;
    grid-template-columns: 49px 43px 54px 52px 126px 62px 46px 51px 40px 78px 82px 49px 75px 266px 100px 90px;
    align-items: center;
    height: 25px;
    padding-left: 7px;
    font-size: 11.5px;
}

.tabs > * {
    justify-self: start;
    line-height: 17px;
    border-bottom: 2px solid transparent;
}

.tabs .active {
    color: #222;
    font-weight: 600;
    border-bottom-color: #107c41;
}

.tabs .btn {
    display: flex;
    align-items: center;
    gap: 4px;
    width: 94px;
    height: 21px;
    margin-top: -1px;
    padding-left: 7px;
    border: 1px solid #aaa;
    border-radius: 4px;
    background: #fff;
}

.tabs .green {
    width: 90px;
    padding-left: 6px;
    border-color: #107c41;
    background: #107c41;
    color: #fff;
}

.green b { font-weight: 600; }
.green svg { stroke: #fff; }
.green .ch { margin-left: 5px; }

/* Ribbon */
.ribbon {
    display: flex;
    height: 82px;
    margin: 0 7px;
    padding-top: 3px;
    background: #fff;
    border-radius: 7px;
    box-shadow: 0 1px 2px rgba(0, 0, 0, 0.2);
}

.group {
    height: 76px;
    border-right: 1px solid #d6d6d6;
}

.body { height: 63px; }

.label {
    display: flex;
    justify-content: center;
    position: relative;
    height: 13px;
    line-height: 16px;
    font-size: 9px;
}

.launch {
    position: absolute;
    right: 3px;
    top: 5px;
    width: 7px;
    height: 7px;
}

.rows2 { display: grid; grid-template-rows: 27px 27px; padding-top: 2px; }
.rows3 { display: grid; grid-template-rows: 19px 22px 22px; }
.rows2 > div, .rows3 > div { align-items: center; }
.line { display: flex; gap: 4px; }
.line .ch { margin-left: -2px; }
.line .far { margin-left: 4px; }
.sep { width: 1px; height: 20px; background: #d6d6d6; }

.big {
    display: flex;
    flex-direction: column;
    align-items: center;
    line-height: 13px;
    padding-top: 2px;
}

.big .i26 { margin-bottom: 3px; }
.big .i24 { margin: 1px 0 4px; }
.last { display: flex; align-items: center; gap: 2px; height: 13px; }

.box {
    display: flex;
    align-items: center;
    justify-content: space-between;
    height: 19px;
    padding: 0 1px 0 2px;
    border: 1px solid #999;
    border-radius: 3px;
    background: #fff;
}

.g-clip { width: 86px; }
.clip { display: grid; grid-template-columns: 49px 37px; padding-left: 1px; }
.clip .big { padding-left: 4px; }
.clip .ch { margin-left: 1px; }
.clip .big .ch { margin: 4px 0 0; }
.g-clip .label { padding-right: 11px; }

.g-font { width: 195px; }
.font1 { display: grid; grid-template-columns: 96px 41px 21px 16px; column-gap: 2px; padding-left: 6px; }
.font2 { display: grid; grid-template-columns: 22px 21px 15px 13px 5px 18px 13px 5px 19px 14px 19px 10px; padding-left: 12px; }
.g-font .label { padding-right: 14px; }

.g-align { width: 161px; }
.align { display: grid; grid-template-columns: 22px 21px 22px 22px 20px 9px 19px 10px; padding-left: 9px; }
.align > :nth-child(5).ch { margin-left: -5px; }
.g-align .label { padding-right: 14px; }

.pressed {
    width: 20px;
    height: 20px;
    margin-left: -3px;
    padding: 2px 3px;
    border: 1px solid #999;
    border-radius: 3px;
    background: #ececec;
}

.g-num { width: 89px; }
.num1 .box { width: 76px; margin: 0 0 0 7px; }
.num2 { display: grid; grid-template-columns: 16px 16px 20px 20px; padding-left: 12px; }
.num3 { display: grid; grid-template-columns: 22px 22px; padding-left: 10px; }
.sym { font-size: 15px; line-height: 20px; }
.zeros { font-size: 8px; }
.g-num .label { padding-right: 14px; }

.g-style { width: 157px; }
.g-style .line { padding-left: 10px; }
.g-cells { width: 91px; }
.g-cells .line { padding-left: 11px; }

.g-edit { width: 157px; }
.edit { display: grid; grid-template-columns: 37px 55px 56px; padding-left: 4px; }
.edit .rows3 { padding-left: 7px; }
.edit .rows3 .ch { margin-left: 0; }
.edit .big:nth-child(2) { padding-left: 4px; }

.g-ana { width: 54px; }
.g-conf { width: 91px; }
.g-trad { width: 96px; }
.g-trad .line { padding-left: 15px; }
.g-labs { width: 47px; }

.collapse { margin: 63px 0 0 25px; }

/* Formula bar */
.formulabar {
    display: flex;
    align-items: center;
    height: 32px;
    padding: 2px 0 0 7px;
}

.namebox, .fxbox, .input {
    display: flex;
    align-items: center;
    height: 19px;
    background: #fff;
    border: 1px solid #ddd;
    border-radius: 4px;
}

.namebox {
    width: 124px;
    justify-content: space-between;
    padding: 0 3px 0 4px;
}

.dots {
    width: 2px;
    height: 10px;
    margin: 0 7px;
    background: repeating-linear-gradient(#444 0 2px, transparent 2px 4px);
}

.fxbox { width: 61px; gap: 9px; padding-left: 4px; }
.fx { font-family: "Liberation Serif", serif; font-size: 15px; color: #222; -webkit-text-stroke: 0.3px #222; }
.input { width: 1061px; margin: 0 -12px 0 4px; }

/* Worksheet */
.work {
    display: flex;
    height: 462px;
}

.sheet {
    position: relative;
    width: 1262px;
    height: 462px;
    overflow: hidden;
    border-bottom: 1px solid #d0d0d0;
}

.cells {
    display: grid;
    grid-template-columns: 34px 15.5px 104.500px 51.500px 104px 52px 109.500px 52px 104px 52px 104px 58px 115.500px 104px 104px 104px;
    grid-template-rows: 25px 23px 26px 24px repeat(16, 24px);
    background: #fff;
    font-family: Lato, Carlito, sans-serif;
    font-size: 16.7px;
    color: #10102e;
}

.colhead, .rowhead, .corner {
    display: flex;
    align-items: center;
    justify-content: center;
    background: #efefef;
    color: #444;
    font-family: "Open Sans", "Noto Sans", sans-serif;
    font-size: 15.5px;
    letter-spacing: -0.9px;
}

.colhead {
    padding-top: 2px;
    border-right: 1px solid #dedede;
    border-bottom: 1px solid #b5b5b5;
}

.rowhead {
    padding-top: 1px;
    border-right: 1px solid #b5b5b5;
    border-bottom: 1px solid #dedede;
}

.corner {
    background: linear-gradient(135deg, transparent 50%, #dcdcdc 50%) 12px 5px / 20px 18px no-repeat #efefef;
    border-right: 1px solid #d0d0d0;
    border-bottom: 1px solid #b5b5b5;
}

.cell {
    display: flex;
    align-items: center;
    padding-left: 3px;
    letter-spacing: -0.6px;
    min-width: 0;
}

.head {
    color: #fff;
    font-size: 17px;
    font-weight: bold;
    letter-spacing: 0.2px;
    background: #212045;
}

.head-B { background: #123a74; border-bottom: 1px solid #0a1c3a; }
.head-D { background: #9035b8; border-bottom: 1px solid #1c0b26; }
.val-B { background: #bcd4f3; }
.val-D { background: #e9d4f2; }
.val-I { background: #e3e0f2; }
.val-K { background: #d9f5eb; }
.val-M { background: #fdedd0; }
.val-B.marked { background: #2aa775; color: #fff; }
.val-D.marked { background: #bd8a0c; }

.formula {
    border-bottom: 2px solid #5ec3a2;
}

.formula-text {
    grid-column: span 6;
    padding-left: 7px;
    background: #e3e0f2;
    border-bottom: 2px solid #5ec3a2;
    color: #111;
    font-size: 17px;
    font-style: italic;
}

.note {
    padding: 7px 0 0 1px;
    color: #1768ac;
    font-size: 17px;
    font-style: italic;
}

.shapes {
    position: absolute;
    left: 0;
    top: 0;
    width: 1262px;
    height: 462px;
}

.vscroll {
    width: 18px;
    display: flex;
    flex-direction: column;
    align-items: center;
    padding-top: 4px;
    background: #f4f4f4;
}

.up { border: 4px solid transparent; border-top: 0; border-bottom: 6px solid #6b6b6b; }
.down { border: 4px solid transparent; border-bottom: 0; border-top: 6px solid #6b6b6b; margin-top: auto; margin-bottom: 2px; }
.vscroll .thumb { width: 7px; height: 48px; margin-top: 4px; border-radius: 4px; background: #6b6b6b; }

/* Sheet tabs */
.sheettabs {
    display: flex;
    align-items: center;
    height: 27px;
    padding-left: 18px;
}

.sheettabs svg:nth-child(2) { margin-left: 18px; }
.sheettabs svg:nth-child(4) { margin-left: 37px; }
.sheettabs .dots { margin: 0 14px 0 585px; }

.tab {
    width: 44px;
    height: 23px;
    margin: 0 0 3px 38px;
    padding: 0 7px;
    background: #fff;
    color: #222;
    font-size: 12px;
}

.tab span {
    display: block;
    line-height: 20px;
    width: 30px;
    border-bottom: 2px solid #107c41;
    -webkit-text-stroke: 0.3px #222;
}

.hscroll {
    display: flex;
    align-items: center;
    width: 478px;
    height: 15px;
    padding-left: 2px;
    background: #f5f5f5;
}

.prev, .next { border: 4px solid transparent; }
.prev { border-left: 0; border-right: 6px solid #6b6b6b; }
.hscroll .thumb { width: 414px; height: 8px; margin-left: 4px; border-radius: 4px; background: #6b6b6b; }
.next { border-right: 0; border-left: 6px solid #6b6b6b; margin-left: 43px; }

/* Status bar */
.status {
    display: grid;
    grid-template-columns: 54px 26px 15px 931px 44px 33px 27px 11px 87px 18px 28px;
    align-items: center;
    height: 18px;
    padding-left: 6px;
    background: #f4f4f4;
    border-bottom: 1px solid #c8c8c8;
    font-size: 9px;
    color: #111;
}

.soft { color: #555; }
.view { display: flex; align-items: center; justify-content: center; width: 33px; height: 17px; background: #dcdcdc; }

.zoom {
    display: block;
    width: 84px;
    height: 10px;
    background: linear-gradient(#888, #888) 0 5px / 84px 1px no-repeat;
}

.zoom i {
    display: block;
    width: 4px;
    height: 10px;
    margin-left: 47px;
    background: #555;
}

/* Taskbar */
.taskbar {
    display: flex;
    height: 33px;
    background: #101010;
    color: #eee;
    font-size: 12.5px;
}

.app {
    display: flex;
    align-items: center;
    justify-content: center;
    width: 35px;
    margin: 0 3px;
    border-bottom: 2px solid transparent;
}

.start { width: 40px; margin: 0; }
.open { border-bottom-color: #76b5e8; }
.current { width: 41px; margin-left: 1px; background: #333; }

.find {
    display: flex;
    align-items: center;
    gap: 9px;
    width: 240px;
    margin-right: 3px;
    padding-left: 10px;
    background: #3f3f3f;
    border: 1px solid #555;
    color: #ccc;
}

.find svg { stroke: #ddd; }

.tray {
    display: grid;
    grid-template-columns: 27px 32px 103px 20px 19px 21px 20px 20px 23px 29px 66px 20px;
    align-items: center;
    margin-left: auto;
    padding-right: 14px;
}

.tray svg { stroke: #eee; }
.small { font-size: 10px; }
.clock { display: flex; flex-direction: column; width: 50px; align-items: center; font-size: 10.500px; line-height: 14px; }
```
